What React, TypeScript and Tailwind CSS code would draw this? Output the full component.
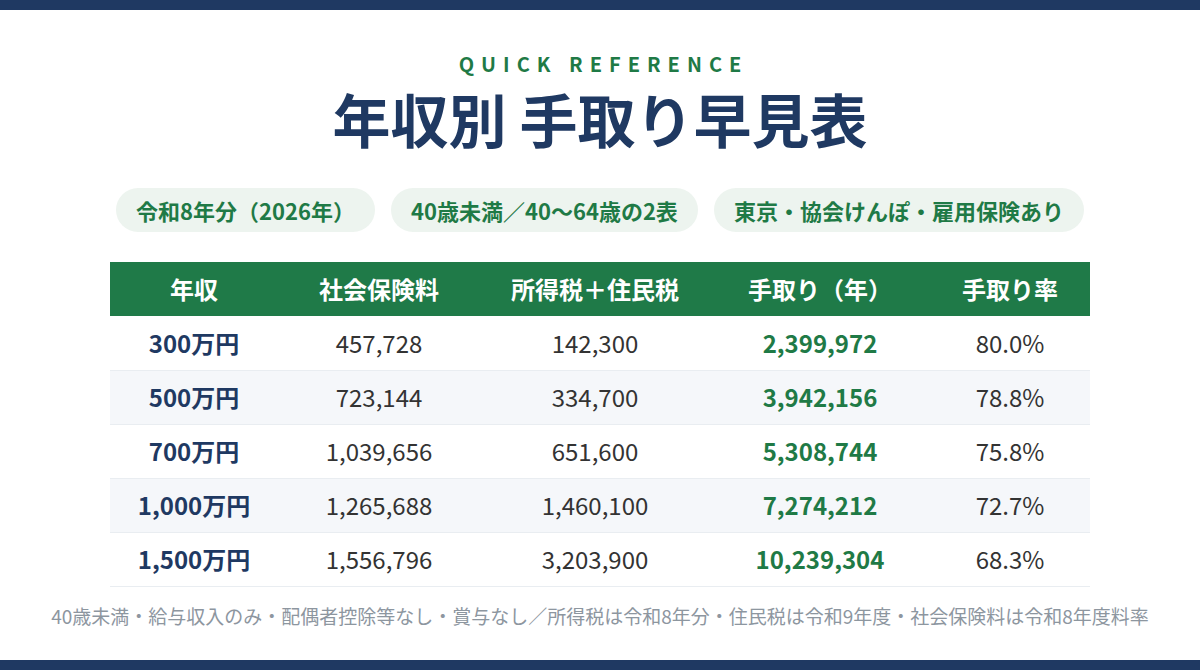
import React from 'react'

type Row = {
  income: string
  social: string
  tax: string
  net: string
  rate: string
}

const rows: Row[] = [
  { income: '300万円', social: '457,728', tax: '142,300', net: '2,399,972', rate: '80.0%' },
  { income: '500万円', social: '723,144', tax: '334,700', net: '3,942,156', rate: '78.8%' },
  { income: '700万円', social: '1,039,656', tax: '651,600', net: '5,308,744', rate: '75.8%' },
  { income: '1,000万円', social: '1,265,688', tax: '1,460,100', net: '7,274,212', rate: '72.7%' },
  { income: '1,500万円', social: '1,556,796', tax: '3,203,900', net: '10,239,304', rate: '68.3%' },
]

const chips = ['令和8年分（2026年）', '40歳未満／40〜64歳の2表', '東京・協会けんぽ・雇用保険あり']

const App = () => {
  return (
    <div
      className="w-[1200px] h-[670px] flex flex-col bg-white"
      style={{ fontFamily: '"Noto Sans CJK JP", "Noto Sans", sans-serif' }}
    >
      {/* top bar */}
      <div className="h-[10px] bg-[#1f3962]"></div>

      <div className="flex-1 flex flex-col items-center">
        <p className="mt-[40px] text-[20px] leading-[28px] font-bold tracking-[0.35em] text-[#1f7a46] pl-[0.35em]">
          QUICK REFERENCE
        </p>
        <h1 className="mt-[11px] text-[58px] leading-[58px] font-bold text-[#1f3962]">
          年収別 手取り早見表
        </h1>

        {/* chips */}
        <div className="mt-[41px] flex gap-4">
          {chips.map((c) => (
            <div
              key={c}
              className="h-[44px] px-5 flex items-center rounded-full bg-[#edf4ef] text-[#1f7a46] text-[22px] font-bold"
            >
              {c}
            </div>
          ))}
        </div>

        {/* table */}
        <table className="mt-[30px] w-[980px] table-fixed border-collapse">
          <colgroup>
            <col className="w-[168px]" />
            <col className="w-[202px]" />
            <col className="w-[230px]" />
            <col className="w-[220px]" />
            <col className="w-[160px]" />
          </colgroup>
          <thead>
            <tr className="h-[54px] bg-[#1f7a48] text-white text-[24px] font-bold">
              <th>年収</th>
              <th>社会保険料</th>
              <th>所得税＋住民税</th>
              <th>手取り（年）</th>
              <th>手取り率</th>
            </tr>
          </thead>
          <tbody>
            {rows.map((r, i) => (
              <tr
                key={r.income}
                className={
                  'h-[54px] text-[24px] text-center border-b border-[#e9edf1] ' +
                  (i % 2 === 1 ? 'bg-[#f5f7fa]' : 'bg-white')
                }
              >
                <td className="font-bold text-[#1f3962]">{r.income}</td>
                <td className="text-[#333333]">{r.social}</td>
                <td className="text-[#333333]">{r.tax}</td>
                <td className="font-bold text-[#1f7a46]">{r.net}</td>
                <td className="text-[#333333]">{r.rate}</td>
              </tr>
            ))}
          </tbody>
        </table>

        <p className="mt-[17px] text-[19px] leading-[24px] text-[#8d969f]">
          40歳未満・給与収入のみ・配偶者控除等なし・賞与なし／所得税は令和8年分・住民税は令和9年度・社会保険料は令和8年度料率
        </p>
      </div>

      {/* bottom bar */}
      <div className="h-[10px] bg-[#1f3962]"></div>
    </div>
  )
}

export default App
